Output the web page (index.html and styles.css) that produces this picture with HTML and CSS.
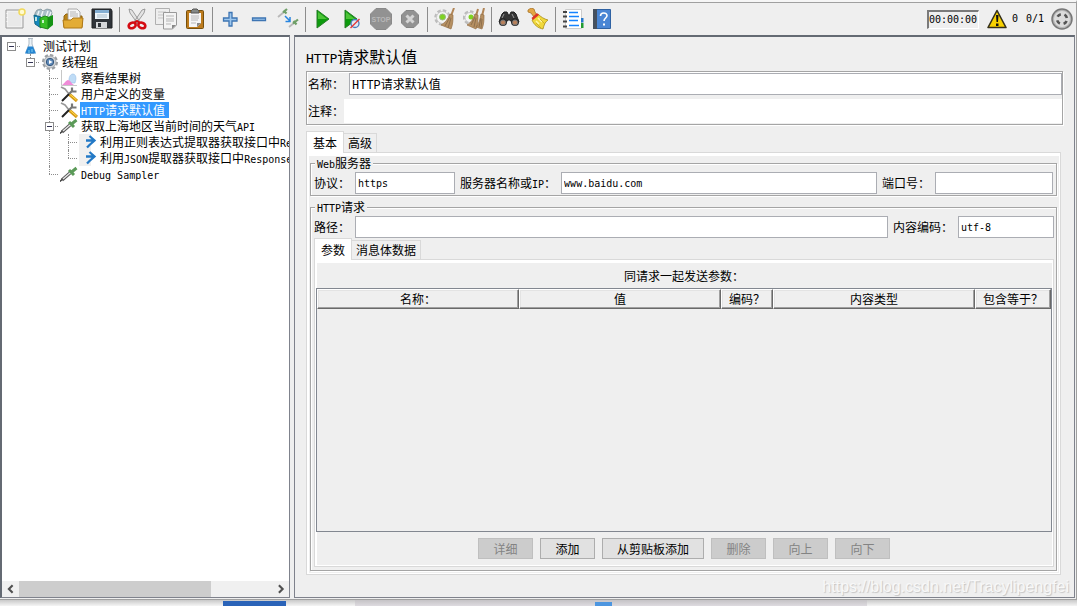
FILE: index.html
```html
<!DOCTYPE html>
<html lang="zh-CN">
<head>
<meta charset="utf-8">
<title>Apache JMeter</title>
<link rel="stylesheet" href="styles.css">
</head>
<body>
<div class="window">
  <header class="toolbar">
    <div class="tools">
      <button class="tool" aria-label="新建"><svg viewBox="0 0 22 22"><path d="M2 2h17v18H2z" fill="#f1f1f1" stroke="#999"/><path d="M4 4h13v14H4z" fill="#e9e9e9"/><path d="M3 5v12" stroke="#fff" stroke-dasharray="1 3"/><circle cx="18" cy="4" r="3" fill="#fffbd0" stroke="#f1da5d" stroke-width="1.5"/></svg></button>
      <button class="tool" aria-label="模板"><svg viewBox="0 0 22 22"><path d="M2 5l2-3 4-1 2 2 4-2 4 1 1 3-2 6-15 1z" fill="#a9bfc8" stroke="#667c85" stroke-width=".6"/><path d="M6 3L4 9M10 3L8 9M15 3l-2 6M18 4l-2 5" stroke="#eef5f6" stroke-width="1.400"/><path d="M1 7l7 2v11l-6-4z" fill="#1688bd" stroke="#126787"/><path d="M7 10l5-2 3 1v12l-8-2z" fill="#37bf26" stroke="#218b18"/><path d="M15 9l5-2v10l-5 4z" fill="#159315"/><path d="M3 9v4M10 12v3" stroke="#ecfff1" stroke-width="1.600"/></svg></button>
      <button class="tool" aria-label="打开"><svg viewBox="0 0 22 22"><path d="M2 8l2-2h5l2 2h9v11H2z" fill="#b98317" stroke="#936610"/><path d="M6 1h9l3 3v10H6z" fill="#f6f6f6" stroke="#999" stroke-width=".8"/><path d="M8 4h6M8 6h8M8 8h8" stroke="#b5b5b5"/><path d="M1 12h8l2-2h10l-1 10H2z" fill="#e3ac36" stroke="#ae7817"/></svg></button>
      <button class="tool" aria-label="保存"><svg viewBox="0 0 22 22"><path d="M1 1h19l1 2v17H1z" fill="#30343a" stroke="#202225"/><path d="M4 2h14v9H4z" fill="#edf5fb"/><path d="M4 2h14v3H4z" fill="#83aed3"/><path d="M6 7h10M6 9h10" stroke="#a9bdcd"/><path d="M5 14h11v6H5z" fill="#d5d7da"/><path d="M7 15h3v4H7z" fill="#30343a"/></svg></button>
      <span class="sep"></span>
      <button class="tool" aria-label="剪切"><svg viewBox="0 0 22 22"><path d="M3 1l3 1 8 12-2 2L4 5zM19 1l-3 1-8 12 2 2 8-11z" fill="#e4e4e4" stroke="#888" stroke-width=".8"/><g fill="none" stroke="#d40c13" stroke-width="2.6"><ellipse cx="6" cy="17.500" rx="3.6" ry="2.7" transform="rotate(-20 6 17)"/><ellipse cx="16" cy="17.500" rx="3.6" ry="2.7" transform="rotate(20 16 17)"/></g><path d="M8 15l3-2 3 2" fill="none" stroke="#d40c13" stroke-width="2"/></svg></button>
      <button class="tool" aria-label="复制"><svg viewBox="0 0 22 22"><path d="M.5.500h14v16H.5z" fill="#eee" stroke="#b0b0b0"/><path d="M3 4h8M3 7h8M3 10h5" stroke="#c5c5c5"/><path d="M8.500 4.500h13V17l-4 4h-9z" fill="#f4f4f4" stroke="#999"/><path d="M11 8h8M11 11h8M11 13h8M11 16h5" stroke="#b5b5b5"/><path d="M21 17h-4v4z" fill="#888"/></svg></button>
      <button class="tool" aria-label="粘贴"><svg viewBox="0 0 22 22"><rect x="2.500" y="2.500" width="17" height="18" rx="1" fill="#bd7b1d" stroke="#76500d"/><path d="M5 5h12v10l-4 4H5z" fill="#f5f5f5"/><path d="M7 3l2-2h4l2 2v2H7z" fill="#858985" stroke="#555"/><path d="M7 8h8M7 10h8M7 12h7M7 15h5" stroke="#b8b8b8"/><path d="M17 15h-4v4z" fill="#888"/></svg></button>
      <span class="sep"></span>
      <button class="tool" aria-label="展开"><svg viewBox="0 0 22 22"><path d="M10 4.500h3V10h5v3h-5v5h-3v-5H4.500v-3H10z" fill="#9dc7ee" stroke="#3e75b3" stroke-width="1.300"/></svg></button>
      <button class="tool" aria-label="折叠"><svg viewBox="0 0 22 22"><path d="M4.500 10h13v2.500h-13z" fill="#9dc7ee" stroke="#3e75b3" stroke-width="1.300"/></svg></button>
      <button class="tool" aria-label="切换"><svg viewBox="0 0 22 22"><path d="M1 9l6-5M12 19l5-4" stroke="#b9b9b9" stroke-width="1.800"/><path d="M6 4.500L10 1M6.500 2.500l3 3M16 15.500l5-4M16.500 13l3 3.500" stroke="#6f9f68" stroke-width="2.200"/><path d="M8 8l5 5m0-4v4.500H8.500" fill="none" stroke="#2784df" stroke-width="1.500"/></svg></button>
      <span class="sep"></span>
      <button class="tool" aria-label="启动"><svg viewBox="0 0 22 22"><path d="M5 2l12 9L5 20z" fill="#0d9b0d" stroke="#277e27"/><path d="M6 4l9 7H6z" fill="#4cc437"/></svg></button>
      <button class="tool" aria-label="不停顿开始"><svg viewBox="0 0 22 22"><path d="M4 2l12 9L4 20z" fill="#0d9b0d" stroke="#277e27"/><path d="M5 4l9 7H5z" fill="#4cc437"/><circle cx="14" cy="15.500" r="4" fill="#e1eaf3" stroke="#477dbd" stroke-width="1.300"/><path d="M9.500 20l9-9" stroke="#e43b3b" stroke-width="1.500"/></svg></button>
      <button class="tool" aria-label="停止" disabled><svg viewBox="0 0 22 22"><path d="M6 .5h10L21.500 6v10L16 21.500H6L.5 16V6z" fill="#929292" stroke="#8a8a8a"/><text x="11" y="14" text-anchor="middle" class="stop-label">STOP</text></svg></button>
      <button class="tool" aria-label="关闭" disabled><svg viewBox="0 0 22 22"><path d="M7 2.500h8L19.500 7v8L15 19.500H7L2.500 15V7z" fill="#929292" stroke="#858585"/><path d="M7.500 7.500l7 7m0-7l-7 7" stroke="#d4d4d4" stroke-width="3"/></svg></button>
      <span class="sep"></span>
      <button class="tool" aria-label="清除"><svg viewBox="0 0 22 22"><circle cx="8.500" cy="9.500" r="7" fill="#f4f4f4" stroke="#bcbcbc" stroke-width="2.500" stroke-dasharray="3.500 2"/><circle cx="8.500" cy="9.500" r="6" fill="#f4f4f4" stroke="#c8c8c8"/><circle cx="8.500" cy="9" r="3" fill="#7ed321" stroke="#98b880"/><path d="M20 0l-3 8" stroke="#b18556" stroke-width="2"/><path d="M16 6l3 1c0 5 0 9-2 14L7 17c4-2 7-6 9-11z" fill="#b69062" stroke="#957046" stroke-width=".7"/><path d="M16 9l-5 9m6-8l-3 10" stroke="#7c6243" stroke-width=".7"/></svg></button>
      <button class="tool" aria-label="清除全部"><svg viewBox="0 0 22 22"><circle cx="7" cy="9.500" r="6" fill="#f4f4f4" stroke="#bcbcbc" stroke-width="2.500" stroke-dasharray="3.500 2"/><circle cx="7" cy="9.500" r="5" fill="#f4f4f4" stroke="#c8c8c8"/><circle cx="8" cy="9" r="2.500" fill="#7ed321"/><path d="M15 1l-2 7M21 0l-2 8" stroke="#b18556" stroke-width="2"/><path d="M12 6l3 1c0 5 0 9-2 14l-9-4c4-2 6-6 8-11zM18 6l3 1c0 5 0 9-2 14l-6-2c3-3 4-8 5-13z" fill="#b69062" stroke="#957046" stroke-width=".7"/><path d="M12 9l-4 8m5-7l-2 9m7-9l-2 9m3-8l-1 9" stroke="#7c6243" stroke-width=".7"/></svg></button>
      <span class="sep"></span>
      <button class="tool" aria-label="查找"><svg viewBox="0 0 22 22"><path d="M4 6l2-2h3l2 4 2-4h3l2 2 3 8-5 3-4-5h-2l-4 5-5-3z" fill="#353535" stroke="#222"/><circle cx="5" cy="14" r="4" fill="#292929"/><circle cx="17" cy="14" r="4" fill="#292929"/><circle cx="5" cy="14.500" r="2.500" fill="#b9805a" stroke="#777"/><circle cx="17" cy="14.500" r="2.500" fill="#b9805a" stroke="#777"/><path d="M6 6l-2 4m10-4l2 4" stroke="#999"/></svg></button>
      <button class="tool" aria-label="重置查找"><svg viewBox="0 0 22 22"><path d="M1 2l3-2 3 1 1 3 2 3-3 2-3-4-3-1z" fill="#e3a545" stroke="#a8762a" stroke-width=".8"/><path d="M5 12l6-6c3 3 6 5 10 6-3 2-4 5-5 9-5-1-9-4-11-9z" fill="#f0d83c" stroke="#a88d18" stroke-width=".8"/><path d="M4.500 10L10 5l2 2-6 5z" fill="#dc3428"/><path d="M9 13l3 3m-1-6l4 4" stroke="#fff7a5" stroke-width="1.500"/><path d="M9 15l5 5m-1-9l5 5" stroke="#c7a51d" stroke-width=".8"/></svg></button>
      <span class="sep"></span>
      <button class="tool" aria-label="函数助手"><svg viewBox="0 0 22 22"><path d="M3.500 1.500h16v19h-16z" fill="#fff" stroke="#ccc"/><path d="M19 10h2.500v4.500H19z" fill="#2476cb"/><path d="M19 15h2.500v5H19z" fill="#209b31"/><path d="M1 4h4M1 8.500h4M1 13.500h4M1 18.500h4" stroke="#444" stroke-width="2"/><path d="M7 4.500h9M7 8.500h10M7 12.500h9M7 17.500h10" stroke="#1684ff" stroke-width="1.400"/></svg></button>
      <button class="tool" aria-label="帮助"><svg viewBox="0 0 22 22"><path d="M2.500 1.500h17v19h-17z" fill="#4a86d4" stroke="#2f62a3"/><path d="M2 1h4v20H2z" fill="#46515f"/><path d="M9.500 8c0-4 6.500-4 6.500-.5 0 2.500-3 2.500-3 5.500" fill="none" stroke="#fff" stroke-width="1.600"/><path d="M12 15.500h2v2h-2z" fill="#fff"/></svg></button>
    </div>
    <div class="status">
      <output class="timer lat" aria-label="运行时间">00:00:00</output>
      <button class="warn" aria-label="警告"><svg viewBox="0 0 20 20"><path d="M10 1.500L19 18.500H1z" fill="#f8d100" stroke="#35301a" stroke-width="1.600" stroke-linejoin="round"/><path d="M9 6h2.500L11 13H9.500zM9 14.500h2.500V17H9z" fill="#111"/></svg></button>
      <span class="lat errors">0</span>
      <span class="lat threads">0/1</span>
      <svg class="remote" viewBox="0 0 22 22"><circle cx="11" cy="11" r="10" fill="#b5b5b5" stroke="#777" stroke-width="1.500"/><circle cx="11" cy="11" r="8" fill="#dcdcdc"/><circle cx="11" cy="11" r="5" fill="none" stroke="#555" stroke-width="2.600" stroke-dasharray="4 3.850" stroke-dashoffset="-2"/></svg>
    </div>
  </header>

  <div class="workspace">
    <nav class="side" aria-label="测试计划">
      <div class="tree">
        <ul>
          <li>
            <div class="row"><span class="gutter"><button class="toggle" aria-label="折叠测试计划"></button></span>
              <svg class="icon" viewBox="0 0 18 16"><path d="M6 .5h5M7 1v5l-3 8 1 1.500h7l1-1.500-3-8V1" fill="#eaf2f7" stroke="#b0bbc5"/><path d="M6 8.500h5l3 7H3z" fill="#2686d2"/><path d="M7 12v3m3-4v3" stroke="#83d2f2"/></svg><span class="name">测试计划</span></div>
            <ul>
              <li>
                <div class="row"><span class="gutter"><button class="toggle" aria-label="折叠线程组"></button></span>
                  <svg class="icon" viewBox="0 0 18 16"><circle cx="9" cy="8" r="6.800" fill="none" stroke="#9b9fa3" stroke-width="2.400" stroke-dasharray="3.300 2"/><circle cx="9" cy="8" r="6" fill="#d3d6d9" stroke="#a7abaf"/><circle cx="9" cy="8" r="3.700" fill="#5f8ab9" stroke="#36577c"/><path d="M8 6l3.500 2L8 10z" fill="#fff"/></svg><span class="name">线程组</span></div>
                <ul>
                  <li><div class="row"><span class="gutter"></span>
                    <svg class="icon" viewBox="0 0 18 16"><path d="M1.500 0v15.500H17" fill="none" stroke="#c7c7c7"/><path d="M9 10c0-4 2-6 4-6s3 2 3 5l-1 4h-4z" fill="#bfdcf6" stroke="#9bbfe6" stroke-width=".6"/><path d="M2 15c2-1 4-5 6-5s3 3 6 5z" fill="#f08cd8"/></svg><span class="name">察看结果树</span></div></li>
                  <li><div class="row"><span class="gutter"></span>
                    <svg class="icon" viewBox="0 0 18 16"><path d="M1 1l4 2 4 5" fill="none" stroke="#999" stroke-width="1.600"/><path d="M9 8l8 7" stroke="#d99b16" stroke-width="3.200"/><path d="M9.500 8l7 6" stroke="#ffe050"/><path d="M2 15l7-7" stroke="#222" stroke-width="2"/><path d="M9 8l3-3M12 1.500v4h4.500" fill="none" stroke="#777" stroke-width="2.200"/></svg><span class="name">用户定义的变量</span></div></li>
                  <li><div class="row selected"><span class="gutter"></span>
                    <svg class="icon" viewBox="0 0 18 16"><path d="M1 1l4 2 4 5" fill="none" stroke="#999" stroke-width="1.600"/><path d="M9 8l8 7" stroke="#d99b16" stroke-width="3.200"/><path d="M9.500 8l7 6" stroke="#ffe050"/><path d="M2 15l7-7" stroke="#222" stroke-width="2"/><path d="M9 8l3-3M12 1.500v4h4.500" fill="none" stroke="#777" stroke-width="2.200"/></svg><span class="name"><span class="lat">HTTP</span>请求默认值</span></div></li>
                  <li>
                    <div class="row"><span class="gutter"><button class="toggle" aria-label="折叠取样器"></button></span>
                      <svg class="icon" viewBox="0 0 18 16"><path d="M0 15.500l3-3" stroke="#333" stroke-width="1.300"/><path d="M2 14l8-7" stroke="#555" stroke-width="3.200"/><path d="M3 13l7-6" stroke="#e6e6e6" stroke-width="1.400"/><path d="M9 4l5 5M11 6.500L16.500 2" stroke="#5b9a58" stroke-width="3"/></svg><span class="name">获取上海地区当前时间的天气<span class="lat">API</span></span></div>
                    <ul>
                      <li><div class="row"><span class="gutter"></span>
                        <svg class="icon" viewBox="0 0 18 16"><path d="M0 0h12v16H0z" fill="#f0f0f0"/><path d="M7 6.500h8M10.500 2l5 4.500-5 4.500-2.500 2.500" fill="none" stroke="#2379c6" stroke-width="2.300"/></svg><span class="name">利用正则表达式提取器获取接口中<span class="lat">Response</span></span></div></li>
                      <li><div class="row"><span class="gutter"></span>
                        <svg class="icon" viewBox="0 0 18 16"><path d="M0 0h12v16H0z" fill="#f0f0f0"/><path d="M7 6.500h8M10.500 2l5 4.500-5 4.500-2.500 2.500" fill="none" stroke="#2379c6" stroke-width="2.300"/></svg><span class="name">利用<span class="lat">JSON</span>提取器获取接口中<span class="lat">Response</span></span></div></li>
                    </ul>
                  </li>
                  <li><div class="row"><span class="gutter"></span>
                    <svg class="icon" viewBox="0 0 18 16"><path d="M0 15.500l3-3" stroke="#333" stroke-width="1.300"/><path d="M2 14l8-7" stroke="#555" stroke-width="3.200"/><path d="M3 13l7-6" stroke="#e6e6e6" stroke-width="1.400"/><path d="M9 4l5 5M11 6.500L16.500 2" stroke="#5b9a58" stroke-width="3"/></svg><span class="name"><span class="lat">Debug Sampler</span></span></div></li>
                </ul>
              </li>
            </ul>
          </li>
        </ul>
      </div>
      <div class="scrollbar">
        <button aria-label="向左滚动"><svg viewBox="0 0 16 15"><path d="M10 4L6.500 7.500 10 11" /></svg></button>
        <div class="track"><div class="thumb"></div></div>
        <button aria-label="向右滚动"><svg viewBox="0 0 16 15"><path d="M6.500 4L10 7.500 6.500 11" /></svg></button>
      </div>
    </nav>

    <main class="editor">
      <h1><span class="lat">HTTP</span>请求默认值</h1>
      <div class="identity">
        <div class="line"><label for="name">名称：</label><input id="name" class="mixed" value="HTTP请求默认值"></div>
        <div class="line comment"><label for="comment">注释：</label><input id="comment"></div>
      </div>

      <div class="tabs"><button class="tab active">基本</button><button class="tab">高级</button></div>
      <div class="pane outer">
        <fieldset>
          <legend><span class="lat">Web</span>服务器</legend>
          <div class="line fields">
            <label for="protocol">协议：</label><input id="protocol" class="w-protocol" value="https">
            <label for="server">服务器名称或<span class="lat">IP</span>：</label><input id="server" class="grow" value="www.baidu.com">
            <label for="port">端口号：</label><input id="port" class="w-port">
          </div>
        </fieldset>
        <fieldset class="request">
          <legend><span class="lat">HTTP</span>请求</legend>
          <div class="line fields">
            <label for="path">路径：</label><input id="path" class="grow">
            <label for="encoding">内容编码：</label><input id="encoding" class="w-encoding" value="utf-8">
          </div>
          <div class="tabs inner"><button class="tab active">参数</button><button class="tab">消息体数据</button></div>
          <div class="pane params">
            <div class="caption">同请求一起发送参数：</div>
            <div class="grid">
              <table>
                <colgroup><col class="c-wide"><col class="c-wide"><col class="c-enc"><col class="c-wide"><col class="c-eq"></colgroup>
                <thead><tr><th>名称：</th><th>值</th><th>编码？</th><th>内容类型</th><th>包含等于？</th></tr></thead>
                <tbody></tbody>
              </table>
            </div>
            <div class="actions">
              <button disabled>详细</button><button>添加</button><button>从剪贴板添加</button><button disabled>删除</button><button disabled>向上</button><button disabled>向下</button>
            </div>
          </div>
        </fieldset>
      </div>
    </main>
  </div>
</div>
<div class="behind"><span class="chip"></span><span class="shade"><span class="mark"></span></span></div>
<div class="watermark">https://blog.csdn.net/Tracylipengfei</div>
</body>
</html>
```

FILE: styles.css
```css
* { box-sizing: border-box; }

body {
  margin: 0;
  min-height: 100vh;
  display: flex;
  flex-direction: column;
  position: relative;
  background: #efefef;
  color: #000;
  font: 12px/16px "Noto Sans CJK SC", sans-serif;
}

button, input { font: inherit; color: inherit; margin: 0; border-radius: 0; }
button { padding: 0; border: 0; background: none; }
svg { display: block; }
ul { list-style: none; margin: 0; padding: 0; }

.lat { font-family: "DejaVu Sans Mono", monospace; font-size: 10px; line-height: 1; }

.window {
  flex: 1;
  display: flex;
  flex-direction: column;
  border-top: 2px solid #f6f6f6;
  border-right: 1px solid #a0a0a0;
  border-bottom: 1px solid #a0a0a0;
}

/* Toolbar */
.toolbar {
  height: 33px;
  display: flex;
  justify-content: space-between;
  align-items: center;
  border-top: 1px solid #a0a0a0;
}
.tools, .status { display: flex; align-items: center; }
.tool { width: 29px; height: 29px; display: grid; place-items: center; }
.tool svg { width: 22px; height: 22px; }
.sep { width: 6px; height: 25px; background: linear-gradient(#8c8c8c, #8c8c8c) center / 1px 100% no-repeat; }
.stop-label { font: bold 7px "Liberation Sans", sans-serif; fill: #b8b8b8; }
.status { padding-right: 3px; }
.timer {
  width: 52px;
  height: 19px;
  line-height: 16px;
  border: 1px solid #fff;
  border-top: 2px solid #7a7a7a;
  border-left: 2px solid #7a7a7a;
}
.warn { margin-left: 8px; }
.warn svg { width: 20px; height: 20px; }
.errors { margin-left: 5px; }
.threads { margin-left: 8px; }
.remote { width: 22px; height: 22px; margin-left: 7px; }

/* Split view */
.workspace {
  flex: 1;
  display: grid;
  grid-template-columns: 290px minmax(0, 1fr);
  gap: 4px;
  padding-right: 1px;
  padding-bottom: 1px;
}
.side {
  display: flex;
  flex-direction: column;
  min-width: 0;
  background: #fff;
  border: 1px solid #7f828c;
  border-top: 2px solid #646a73;
  border-left: 2px solid #646a73;
}
.tree { flex: 1; overflow: hidden; padding-top: 1px; white-space: nowrap; }
.tree ul ul { padding-left: 19px; }
.tree li { position: relative; }
.tree ul ul > li::before {
  content: "";
  position: absolute;
  left: 9px;
  top: 0;
  bottom: 0;
  border-left: 1px dotted #8c8c8c;
}
.tree ul ul > li:last-child::before { bottom: auto; height: 8px; }
.row { display: flex; align-items: center; height: 16px; }
.gutter {
  width: 19px;
  height: 16px;
  flex: none;
  display: grid;
  place-items: center;
  background: repeating-linear-gradient(90deg, #8c8c8c 0 1px, transparent 1px 2px) 9px 8px / 10px 1px no-repeat;
}
.toggle {
  position: relative;
  width: 9px;
  height: 9px;
  border: 1px solid #8c8c8c;
  background: linear-gradient(#335, #335) center / 5px 1px no-repeat #fff;
}
.icon { width: 18px; height: 16px; flex: none; margin: 0 2px 0 1px; }
.name { height: 16px; padding: 0 1px; line-height: 16px; }
.selected .name { background: #3399ff; color: #fff; padding-right: 4px; }

.scrollbar { height: 16px; display: flex; background: #f0f0f0; }
.scrollbar button { width: 17px; flex: none; }
.scrollbar path { fill: none; stroke: #505050; stroke-width: 2; }
.track { flex: 1; }
.thumb { width: 76%; height: 100%; background: #cdcdcd; }

/* Editor */
.editor {
  display: flex;
  flex-direction: column;
  min-width: 0;
  padding: 9px 11px 22px;
  border: 1px solid #7f828c;
  border-top: 2px solid #646a73;
}
h1 { margin: 0 0 5px; font-size: 16px; line-height: 20px; font-weight: 400; }
h1 .lat { font-size: 13px; }
.identity, fieldset {
  border: 1px solid #a5a5a5;
  box-shadow: 1px 1px 0 #fff, inset 1px 1px 0 #fff;
}
.identity { padding: 1px 0 1px 1px; margin-bottom: 6px; display: grid; gap: 4px; }
.line { display: flex; align-items: center; }
.line label { white-space: nowrap; flex: none; }
.line input {
  min-width: 0;
  height: 22px;
  padding: 0 2px;
  border: 1px solid #abadb3;
  background: #fff;
  font-family: "DejaVu Sans Mono", "Noto Sans CJK SC", monospace;
  font-size: 10px;
  outline: 0;
}
.line .mixed { font-family: "Liberation Mono", "Noto Sans CJK SC", monospace; font-size: 12px; }
.identity input { flex: 1; margin-left: 5px; }
.identity .comment input { border: 0; height: 24px; margin-left: 0; }
.fields { gap: 5px; }
.fields .grow { flex: 1; }
.fields .w-protocol { width: 100px; }
.fields .w-port { width: 118px; }
.fields .w-encoding { width: 96px; }

.tabs { display: flex; align-items: flex-end; height: 21px; }
.tab {
  height: 19px;
  padding: 0 4px;
  line-height: 18px;
  border: 1px solid #d9d9d9;
  border-left: 0;
  border-bottom: 0;
}
.tab.active {
  height: 22px;
  margin-bottom: -1px;
  padding: 0 6px;
  border-left: 1px solid #d9d9d9;
  background: #fff;
  position: relative;
}
.pane {
  flex: 1;
  display: flex;
  flex-direction: column;
  padding: 4px 3px 3px;
  border: 1px solid #d9d9d9;
  box-shadow: inset 2px 3px 0 #fff, inset -1px -1px 0 #fff;
}
.outer { margin-right: 2px; }
fieldset { margin: 0; padding: 2px 3px 1px; min-width: 0; }
legend { margin-left: 1px; padding: 0 2px; line-height: 12px; background: #efefef; }
.request {
  flex: 1;
  display: flex;
  flex-direction: column;
  margin-top: 5px;
  padding-right: 2px;
  padding-bottom: 3px;
}
.params { padding: 8px 1px 7px; }
.caption { text-align: center; line-height: 16px; margin-bottom: 4px; }
.grid { flex: 1; border: 1px solid #828790; }
table { width: 100%; table-layout: fixed; border-collapse: separate; border-spacing: 0; }
.c-wide { width: 202px; }
.c-enc { width: 52px; }
.c-eq { width: 76px; }
th {
  height: 20px;
  padding: 0;
  line-height: 16px;
  font-weight: 400;
  white-space: nowrap;
  border: 1px solid #fff;
  border-right-color: #696969;
  border-bottom-color: #696969;
  box-shadow: inset -1px -1px 0 #a0a0a0, inset 1px 1px 0 #e3e3e3;
}
.actions { display: flex; justify-content: center; gap: 7px; margin-top: 6px; }
.actions button {
  height: 21px;
  min-width: 55px;
  padding: 0 14px;
  line-height: 19px;
  background: #e1e1e1;
  border: 1px solid #adadad;
}
.actions button:disabled { background: #ccc; border-color: #bfbfbf; color: #838383; }

/* Strip of desktop below the window */
.behind {
  height: 6px;
  display: grid;
  grid-template-columns: 223px 63px 69px 512px 1fr;
  background: linear-gradient(#c9c9c9, #f5f5f5);
}
.chip { grid-column: 2; margin-top: 1px; background: #2a63b8; }
.shade { grid-column: 4; background: linear-gradient(#c5c3c6, #dedbe0); }
.mark { display: block; width: 17px; height: 4px; margin: 2px 0 0 240px; background: #4d96e0; }
.watermark {
  position: absolute;
  right: 8px;
  bottom: 9px;
  font: 16px/20px "Liberation Sans", sans-serif;
  color: #f8f8f8;
  text-shadow: 1px 1px 1px #c4c4c4;
  pointer-events: none;
}
```
